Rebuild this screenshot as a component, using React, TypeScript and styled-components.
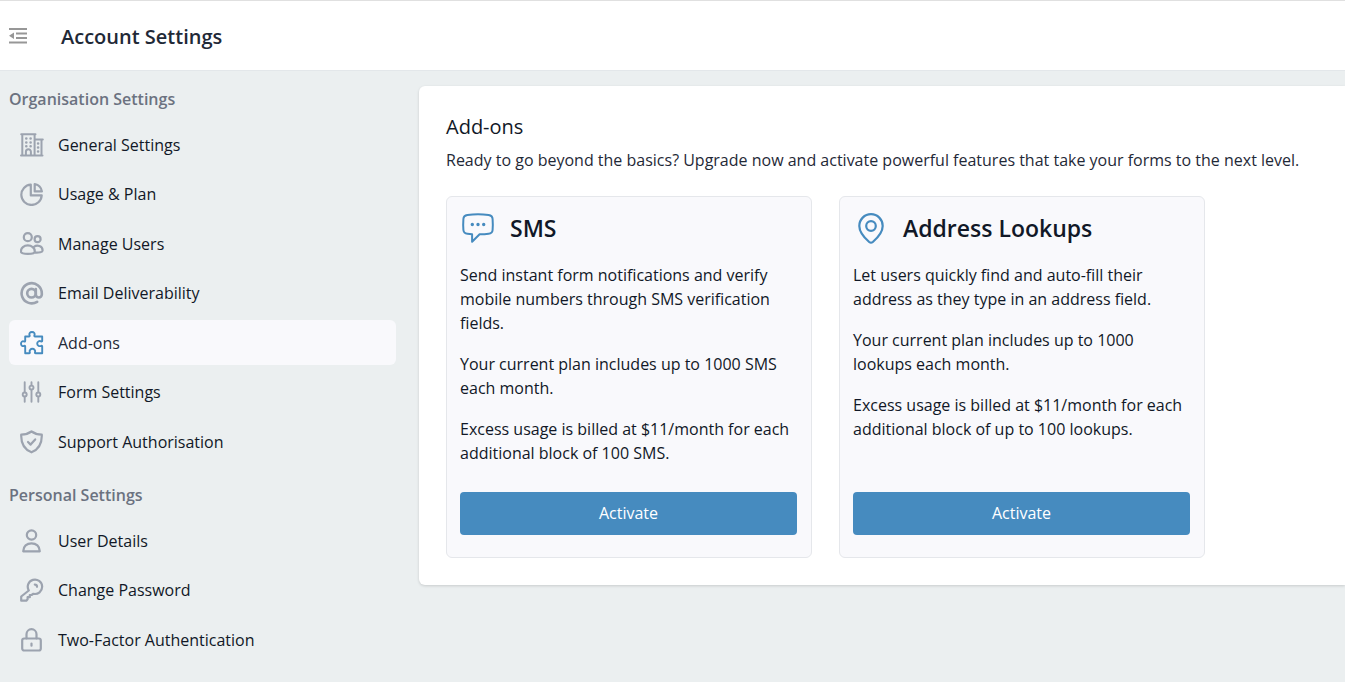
import React from "react";
import styled, { createGlobalStyle } from "styled-components";

const GlobalStyle = createGlobalStyle`
  *, *::before, *::after { box-sizing: border-box; }
  body {
    margin: 0;
    background: #ebeff0;
    color: #111827;
    font: 400 16px/24px "Open Sans", sans-serif;
  }
  h1, h2, h3, p, ul { margin: 0; padding: 0; }
  ul { list-style: none; }
`;

const Page = styled.div`
  min-height: 100vh;
`;

const Header = styled.header`
  display: flex;
  align-items: center;
  gap: 33px;
  height: 71px;
  padding: 2px 9px 0;
  background: #fff;
  border-top: 1px solid #e0e0e0;
  border-bottom: 1px solid #e3e7ea;
`;

const CollapseButton = styled.button`
  display: flex;
  padding: 0;
  border: 0;
  background: none;
  color: #979797;
  cursor: pointer;
`;

const PageTitle = styled.h1`
  font-size: 20px;
  line-height: 28px;
  font-weight: 600;
  color: #1f2937;
`;

const Body = styled.div`
  display: flex;
  align-items: flex-start;
  gap: 23px;
  padding: 15px 0 15px 9px;
`;

const Sidebar = styled.nav`
  flex: 0 0 387px;
`;

const Section = styled.section`
  & + & { margin-top: 19px; }
`;

const SectionTitle = styled.h2`
  margin: 1px 0 11px;
  font-size: 16px;
  line-height: 24px;
  font-weight: 600;
  color: #6b7280;
`;

const NavItem = styled.li`
  margin-bottom: 4px;
  &:nth-child(even) { margin-bottom: 5px; }
  &:last-child { margin-bottom: 0; }
`;

const NavLink = styled.a<{ $active?: boolean }>`
  display: flex;
  align-items: center;
  gap: 14px;
  height: 45px;
  padding: 0 11px;
  border-radius: 6px;
  text-decoration: none;
  color: ${(p) => (p.$active ? "#1f2937" : "#111827")};
  background: ${(p) => (p.$active ? "#f9f9fc" : "transparent")};
  svg { color: ${(p) => (p.$active ? "#468bbf" : "#9ca3af")}; }
`;

const Panel = styled.main`
  flex: 1;
  min-width: 0;
  padding: 27px;
  background: #fff;
  border-radius: 6px 0 0 6px;
  box-shadow: 0 1px 3px rgba(0, 0, 0, 0.15);
`;

const PanelTitle = styled.h2`
  font-size: 20px;
  line-height: 28px;
  font-weight: 400;
`;

const PanelIntro = styled.p`
  margin: 7px 0 24px;
  color: #1f2937;
`;

const Cards = styled.div`
  display: grid;
  grid-template-columns: repeat(2, minmax(0, 366px));
  gap: 27px;
`;

const Card = styled.article`
  display: flex;
  flex-direction: column;
  padding: 13px 14px 22px 13px;
  background: #f9f9fc;
  border: 1px solid #e5e7eb;
  border-radius: 6px;
`;

const CardHeader = styled.header`
  display: flex;
  align-items: center;
  gap: 14px;
  height: 36px;
`;

const CardTitle = styled.h3`
  font-size: 23px;
  line-height: 32px;
  font-weight: 600;
`;

const CardBody = styled.div`
  display: flex;
  flex: 1;
  flex-direction: column;
  gap: 17px;
  margin: 17px 0 27px;
`;

const ActivateButton = styled.button`
  height: 43px;
  padding: 0 6px 2px;
  border: 0;
  border-radius: 4px;
  background: #468bbf;
  color: #fff;
  font: inherit;
  cursor: pointer;
`;

const IconTint = styled.span`
  display: flex;
  color: #468bbf;
`;

type IconProps = { size?: number; stroke?: number; children: React.ReactNode };

const Icon = ({ size = 24, stroke = 2.2, children }: IconProps) => (
  <svg
    width={size}
    height={size}
    viewBox={`0 0 ${size} ${size}`}
    fill="none"
    stroke="currentColor"
    strokeWidth={stroke}
    strokeLinecap="round"
    strokeLinejoin="round"
    aria-hidden="true"
  >
    {children}
  </svg>
);

const BuildingIcon = () => (
  <Icon stroke={2}>
    <path d="M1 22.5h21.5M1.2 1.2h14.3M2.3 1.5v21M14.6 1.5v21M14.8 6.5h8M21.5 6.5v16M5.900 22.3v-3.500a2.500 2.500 0 0 1 5 0v3.500" />
    <path d="M6.300 5.500h.01M10.600 5.500h.01M6.300 9.500h.01M10.600 9.500h.01M6.300 13.300h.01M10.600 13.300h.01M18.100 10.500h.01M18.100 14.500h.01M18.100 18.500h.01" strokeWidth="2.600" />
  </Icon>
);

const PieIcon = () => (
  <Icon>
    <path d="M10.800 2.600a10.200 10.200 0 1 0 10.900 10.800H10.800z" />
    <path d="M14.700 2v7.400h7.200A9.200 9.200 0 0 0 14.700 2z" />
  </Icon>
);

const UsersIcon = () => (
  <Icon>
    <circle cx="7.800" cy="5.200" r="4" />
    <circle cx="17.600" cy="7.200" r="3" />
    <path d="M.900 19.400C.900 16 4 13.400 7.800 13.400s7 2.600 7 6c0 3.200-13.900 3.200-13.900 0z" />
    <path d="M14 14.800c3.200-2.400 8.600-.8 8.600 3.600 0 1.800-3.400 2.400-7.400 2.200" />
  </Icon>
);

const AtIcon = () => (
  <Icon stroke={2.600}>
    <circle cx="11.500" cy="12.200" r="4.300" />
    <path d="M15.800 8v5.600a3 3 0 0 0 6-.2v-1.200a10.100 10.100 0 1 0-4.700 8.600" />
  </Icon>
);

const PuzzleIcon = () => (
  <Icon stroke={1.900}>
    <path d="M5.200 5.500h3.700c.8 0 1-.6.7-1.200C8.700 2.500 10 1 12 1s3.300 1.500 2.400 3.300c-.3.6-.1 1.200.7 1.200h7.100v4.300c0 .7-.5.9-1.100.6-2-.9-3.900.3-3.900 2.200s1.900 3.100 3.900 2.200c.6-.3 1.100-.1 1.100.6v6.900h-6.500c-.7 0-.9-.5-.7-1.100.8-1.900-.9-3.400-2.600-3.400s-3.400 1.500-2.600 3.400c.2.6 0 1.100-.7 1.100H5.200v-6.700c0-.8-.5-1-1.100-.7C2.500 15.700 1 14.400 1 12.700s1.500-3.100 3.100-2.200c.6.300 1.100.1 1.100-.7z" />
  </Icon>
);

const SlidersIcon = () => (
  <Icon stroke={1.900}>
    <path d="M4.700 2.300v9.800M4.700 17v4.700M11.500 2.300v3M11.500 9.800v12M18.300 2.300v9.800M18.300 17v4.700" />
    <circle cx="4.700" cy="14.500" r="2" />
    <circle cx="11.500" cy="7.600" r="2" />
    <circle cx="18.300" cy="14.500" r="2" />
  </Icon>
);

const ShieldIcon = () => (
  <Icon>
    <path d="M11.500 1.500c3 2.200 6.400 3 10.300 3.200.3 9-3.800 15-10.300 17.600C5 19.700.9 13.700 1.200 4.700 5.100 4.500 8.500 3.700 11.500 1.500z" />
    <path d="M8 12l2.600 2.600 4.600-5.200" />
  </Icon>
);

const UserIcon = () => (
  <Icon>
    <circle cx="11.500" cy="6" r="4.700" />
    <path d="M3.200 22.300c0-5 3.700-8 8.300-8s8.300 3 8.300 8z" />
  </Icon>
);

const KeyIcon = () => (
  <Icon>
    <path d="M8.800 12.500a7.200 7.200 0 1 1 4.600 3.300L11.500 17H9.800v2.200H7.600v2L6.300 22.700H1.200v-4.200z" />
    <path d="M14.800 6.600c1.400 0 2.200.8 2.200 2.200" />
  </Icon>
);

const LockIcon = () => (
  <Icon>
    <rect x="2.200" y="10.500" width="18.600" height="12" rx="2" />
    <path d="M6.500 10.300V6.200a5 5 0 0 1 10 0v4.100M11.500 15.500v2.200" />
  </Icon>
);

const MessageIcon = () => (
  <Icon size={36} stroke={2}>
    <path d="M7.400 5c7.100-1 14.100-1 21.200 0 2.400.4 3.900 1.800 4 4 .3 4 .3 7.400 0 11-.2 2.200-1.600 3.500-4 3.700-2.400.3-5 .5-9 .6l-7.500 7.400v-7.500l-4.700-.5c-2.400-.2-3.800-1.500-4-3.700-.3-3.600-.3-7 0-11 .1-2.200 1.600-3.600 4-4z" />
    <path d="M12.300 14.500h.01M18 14.500h.01M23.700 14.500h.01" strokeWidth="3.400" />
  </Icon>
);

const PinIcon = () => (
  <Icon size={36}>
    <path d="M16.200 32C10 26.500 6.300 21.500 6.300 15.900a11.700 11.700 0 0 1 23.400 0C29.700 21.500 26 26.500 19.800 32q-1.800 1.400-3.600 0z" />
    <circle cx="18" cy="16" r="4.800" />
  </Icon>
);

const sections = [
  {
    title: "Organisation Settings",
    items: [
      { label: "General Settings", icon: <BuildingIcon /> },
      { label: "Usage & Plan", icon: <PieIcon /> },
      { label: "Manage Users", icon: <UsersIcon /> },
      { label: "Email Deliverability", icon: <AtIcon /> },
      { label: "Add-ons", icon: <PuzzleIcon />, active: true },
      { label: "Form Settings", icon: <SlidersIcon /> },
      { label: "Support Authorisation", icon: <ShieldIcon /> },
    ],
  },
  {
    title: "Personal Settings",
    items: [
      { label: "User Details", icon: <UserIcon /> },
      { label: "Change Password", icon: <KeyIcon /> },
      { label: "Two-Factor Authentication", icon: <LockIcon /> },
    ],
  },
];

const addons = [
  {
    title: "SMS",
    icon: <MessageIcon />,
    text: [
      "Send instant form notifications and verify mobile numbers through SMS verification fields.",
      "Your current plan includes up to 1000 SMS each month.",
      "Excess usage is billed at $11/month for each additional block of 100 SMS.",
    ],
  },
  {
    title: "Address Lookups",
    icon: <PinIcon />,
    text: [
      "Let users quickly find and auto-fill their address as they type in an address field.",
      "Your current plan includes up to 1000 lookups each month.",
      "Excess usage is billed at $11/month for each additional block of up to 100 lookups.",
    ],
  },
];

export default function App() {
  return (
    <Page>
      <GlobalStyle />
      <Header>
        <CollapseButton type="button" aria-label="Collapse menu">
          <svg width="19" height="18" viewBox="0 0 19 18" fill="currentColor" aria-hidden="true">
            <path d="M0 0h18v2H0zM7 4.500h11v2H7zM7 9h11v2H7zM0 13.500h18v2H0zM0 7.800l5-3.200v6.400z" />
          </svg>
        </CollapseButton>
        <PageTitle>Account Settings</PageTitle>
      </Header>
      <Body>
        <Sidebar aria-label="Settings">
          {sections.map((section) => (
            <Section key={section.title}>
              <SectionTitle>{section.title}</SectionTitle>
              <ul>
                {section.items.map((item) => {
                  const active = "active" in item;
                  return (
                    <NavItem key={item.label}>
                      <NavLink href="#" $active={active} aria-current={active ? "page" : undefined}>
                        {item.icon}
                        {item.label}
                      </NavLink>
                    </NavItem>
                  );
                })}
              </ul>
            </Section>
          ))}
        </Sidebar>
        <Panel>
          <PanelTitle>Add-ons</PanelTitle>
          <PanelIntro>
            Ready to go beyond the basics? Upgrade now and activate powerful features that take your
            forms to the next level.
          </PanelIntro>
          <Cards>
            {addons.map((addon) => (
              <Card key={addon.title}>
                <CardHeader>
                  <IconTint>{addon.icon}</IconTint>
                  <CardTitle>{addon.title}</CardTitle>
                </CardHeader>
                <CardBody>
                  {addon.text.map((line) => (
                    <p key={line}>{line}</p>
                  ))}
                </CardBody>
                <ActivateButton type="button">Activate</ActivateButton>
              </Card>
            ))}
          </Cards>
        </Panel>
      </Body>
    </Page>
  );
}
